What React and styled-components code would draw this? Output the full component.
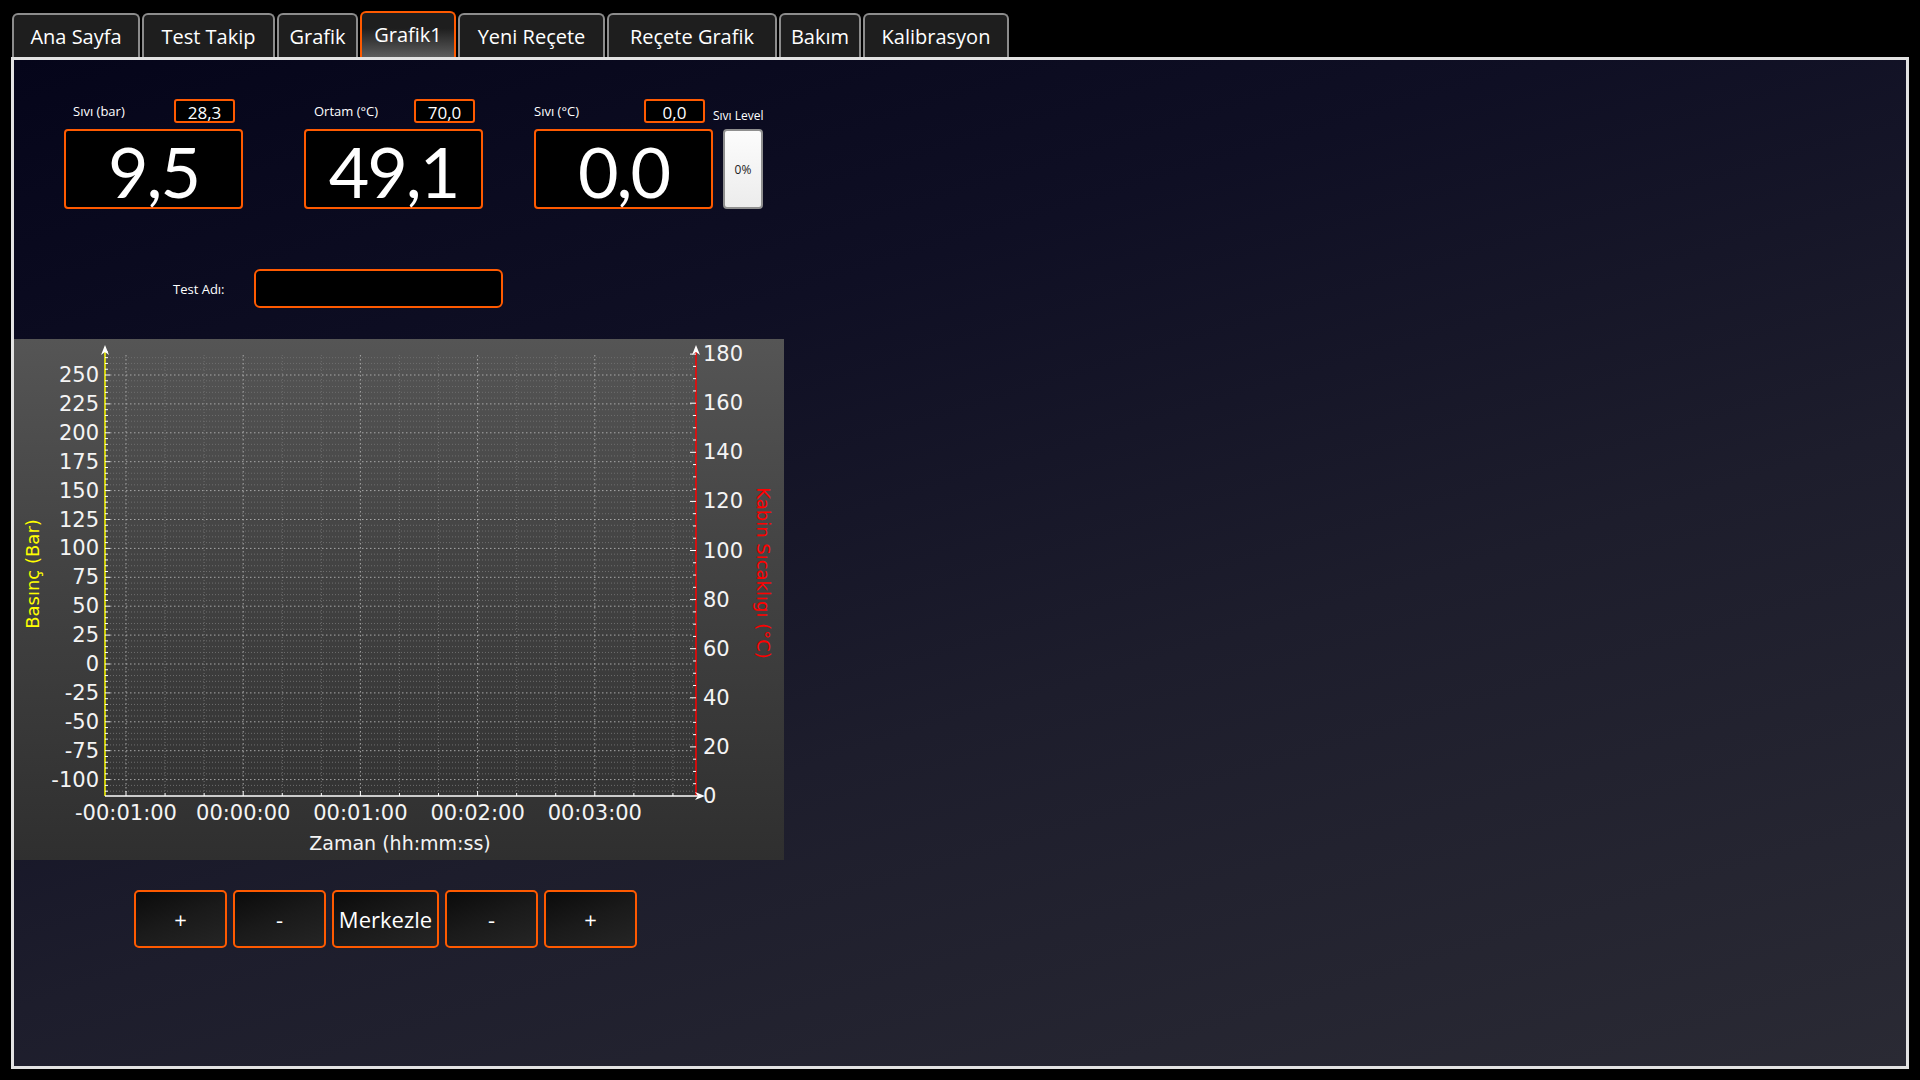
import React from 'react';
import styled, { createGlobalStyle } from 'styled-components';

const GlobalStyle = createGlobalStyle`
    html, body {
        margin: 0;
        padding: 0;
        background: #000;
    }
    * {
        box-sizing: border-box;
    }
`;

const UI_FONT = `"Open Sans", "Noto Sans", sans-serif`;
const CHART_FONT = `"DejaVu Sans", Verdana, sans-serif`;
const ORANGE = '#ff5a00';

export const Screen = styled.div`
    width: 1920px;
    height: 1080px;
    background: #000;
    padding-top: 11px;
    font-family: ${UI_FONT};
    color: #fff;
`;

export const TabBar = styled.div`
    display: flex;
    align-items: flex-end;
    gap: 2px;
    height: 46px;
    padding-left: 12px;
`;

export const Tab = styled.div`
    width: ${(p) => p.$w}px;
    height: ${(p) => (p.$active ? 46 : 44)}px;
    display: flex;
    align-items: center;
    justify-content: center;
    font-size: 20px;
    color: #fff;
    border: 2px solid ${(p) => (p.$active ? ORANGE : '#8c8c8c')};
    border-bottom: none;
    border-radius: 6px 6px 0 0;
    background: ${(p) =>
        p.$active
            ? 'linear-gradient(180deg, #1e1e1e 35%, #5c5c5c 100%)'
            : '#1e1e1e'};
    padding-bottom: ${(p) => (p.$active ? 2 : 0)}px;
`;

export const Panel = styled.div`
    margin-left: 11px;
    width: 1898px;
    height: 1012px;
    border: 3px solid #e2e2e2;
    background: linear-gradient(163deg, #05051a 0%, #0f0f24 30%, #1d1d2c 60%, #2a2a34 100%);
    display: flex;
    flex-direction: column;
`;

export const ReadoutRow = styled.div`
    display: flex;
    align-items: flex-start;
    padding: 39px 0 0 50px;
`;

export const Readout = styled.div`
    width: 179px;
    margin-left: ${(p) => p.$ml || 0}px;
    display: flex;
    flex-direction: column;
    gap: 6px;
`;

export const ReadoutHead = styled.div`
    height: 24px;
    display: flex;
    align-items: center;
    justify-content: space-between;
    padding: 0 8px 0 ${(p) => p.$pad}px;
`;

export const SmallLabel = styled.span`
    font-size: 13px;
    color: #fff;
    white-space: nowrap;
`;

export const SetBox = styled.div`
    width: 61px;
    height: 24px;
    border: 2px solid ${ORANGE};
    border-radius: 3px;
    background: #000;
    display: flex;
    align-items: center;
    justify-content: center;
    font-size: 17px;
    padding-top: 2px;
`;

export const BigBox = styled.div`
    height: 80px;
    border: 2px solid ${ORANGE};
    border-radius: 4px;
    background: #000;
    display: flex;
    align-items: center;
    justify-content: center;
    font-family: "Lato", "Open Sans", sans-serif;
    font-size: 70px;
    letter-spacing: -2px;
    padding-top: 4px;
`;

export const LevelCol = styled.div`
    width: 56px;
    display: flex;
    flex-direction: column;
    gap: 6px;
`;

export const LevelHead = styled.div`
    height: 24px;
    display: flex;
    align-items: flex-end;
    font-size: 12px;
    line-height: 14px;
    white-space: nowrap;
`;

export const LevelBar = styled.div`
    margin-left: 10px;
    width: 40px;
    height: 80px;
    border: 2px solid #8f8f8f;
    border-radius: 4px;
    background: linear-gradient(180deg, #fcfcfc, #ececec);
    color: #222;
    font-size: 12px;
    display: flex;
    align-items: center;
    justify-content: center;
`;

export const NameRow = styled.div`
    display: flex;
    align-items: center;
    gap: 29px;
    margin-top: 60px;
    padding-left: 159px;
`;

export const NameInput = styled.div`
    width: 249px;
    height: 39px;
    border: 2px solid ${ORANGE};
    border-radius: 6px;
    background: #000;
`;

export const ChartBox = styled.div`
    margin-top: 31px;
    width: 770px;
    height: 521px;
    background: linear-gradient(180deg, #555555 0%, #444444 40%, #2f2f2f 100%);
    svg {
        display: block;
    }
`;

export const ButtonRow = styled.div`
    display: flex;
    gap: 6px;
    margin-top: 30px;
    padding-left: 120px;
`;

export const ZoomButton = styled.div`
    width: ${(p) => p.$w || 93}px;
    height: 58px;
    border: 2px solid ${ORANGE};
    border-radius: 5px;
    background: linear-gradient(160deg, #0b0b0b 0%, #1a1a1a 50%, #252525 100%);
    display: flex;
    align-items: center;
    justify-content: center;
    font-size: 22px;
    color: #fff;
`;

const tabs = [
    { label: 'Ana Sayfa', w: 128 },
    { label: 'Test Takip', w: 133 },
    { label: 'Grafik', w: 81 },
    { label: 'Grafik1', w: 96, active: true },
    { label: 'Yeni Reçete', w: 147 },
    { label: 'Reçete Grafik', w: 170 },
    { label: 'Bakım', w: 82 },
    { label: 'Kalibrasyon', w: 146 },
];

const readouts = [
    { label: 'Sıvı (bar)', set: '28,3', value: '9,5', pad: 9, ml: 0 },
    { label: 'Ortam (°C)', set: '70,0', value: '49,1', pad: 10, ml: 61 },
    { label: 'Sıvı (°C)', set: '0,0', value: '0,0', pad: 0, ml: 51 },
];

// chart geometry (svg coords)
const LEFT_X = 91;
const RIGHT_X = 682;
const BASE_Y = 457;
const leftY = (v) => 325 - v * 1.156;
const rightY = (v) => BASE_Y - v * 2.455;
const timeX = (k) => 112 + k * 117.2;

const Chart = () => {
    const hMinor = [];
    const leftTicks = [];
    for (let v = -110; v <= 275; v += 5) {
        const y = leftY(v);
        const major = v % 25 === 0;
        if (y > 12 && y < 455) {
            leftTicks.push({ y, major });
        }
        if (y > 16 && y < 453 && !major) hMinor.push(y);
    }
    const hMajor = [];
    for (let v = -100; v <= 250; v += 25) hMajor.push(leftY(v));

    const rightTicks = [];
    for (let v = 5; v <= 180; v += 5) rightTicks.push({ y: rightY(v), major: v % 20 === 0 });

    const vMajor = [0, 1, 2, 3, 4].map(timeX);
    const vMinor = [];
    for (let k = 0; k < 5; k++) {
        [1, 2].forEach((j) => {
            const x = timeX(k + j / 3);
            if (x < RIGHT_X - 3) vMinor.push(x);
        });
    }
    const xLabels = ['-00:01:00', '00:00:00', '00:01:00', '00:02:00', '00:03:00'];
    const leftLabels = [250, 225, 200, 175, 150, 125, 100, 75, 50, 25, 0, -25, -50, -75, -100];
    const rightLabels = [180, 160, 140, 120, 100, 80, 60, 40, 20, 0];

    return (
        <svg width="770" height="521" viewBox="0 0 770 521" fontFamily={CHART_FONT}>
            {/* grid */}
            {hMinor.map((y, i) => (
                <line key={`hm${i}`} x1={LEFT_X + 5} x2={RIGHT_X - 2} y1={y} y2={y}
                    stroke="#6e6e6e" strokeWidth="1" strokeDasharray="1 2" />
            ))}
            {vMinor.map((x, i) => (
                <line key={`vm${i}`} x1={x} x2={x} y1={16} y2={453}
                    stroke="#6e6e6e" strokeWidth="1" strokeDasharray="1 2" />
            ))}
            {hMajor.map((y, i) => (
                <line key={`hM${i}`} x1={LEFT_X + 5} x2={RIGHT_X - 2} y1={y} y2={y}
                    stroke="#a8a8a8" strokeWidth="1" strokeDasharray="1.5 2.5" />
            ))}
            {vMajor.map((x, i) => (
                <line key={`vM${i}`} x1={x} x2={x} y1={16} y2={453}
                    stroke="#a8a8a8" strokeWidth="1" strokeDasharray="1.5 2.5" />
            ))}

            {/* left axis */}
            <line x1={LEFT_X} x2={LEFT_X} y1={8} y2={BASE_Y} stroke="#ffff00" strokeWidth="1.5" />
            {leftTicks.map((t, i) => (
                <line key={`lt${i}`} x1={LEFT_X} x2={LEFT_X + (t.major ? 5 : 3)} y1={t.y} y2={t.y}
                    stroke="#fff" strokeWidth="1" />
            ))}
            <polygon points={`${LEFT_X},6 ${LEFT_X - 4},16 ${LEFT_X},13 ${LEFT_X + 4},16`} fill="#fff" />
            {leftLabels.map((v) => (
                <text key={`ll${v}`} x={85} y={leftY(v)} fill="#f4f4f4" fontSize="21"
                    textAnchor="end" dominantBaseline="central">{v}</text>
            ))}

            {/* right axis */}
            <line x1={RIGHT_X} x2={RIGHT_X} y1={8} y2={BASE_Y} stroke="#ff0000" strokeWidth="1.5" />
            {rightTicks.map((t, i) => (
                <line key={`rt${i}`} x1={RIGHT_X - (t.major ? 6 : 3)} x2={RIGHT_X} y1={t.y} y2={t.y}
                    stroke="#fff" strokeWidth="1" />
            ))}
            <polygon points={`${RIGHT_X},6 ${RIGHT_X - 4},16 ${RIGHT_X},13 ${RIGHT_X + 4},16`} fill="#fff" />
            {rightLabels.map((v) => (
                <text key={`rl${v}`} x={689} y={rightY(v)} fill="#f4f4f4" fontSize="21"
                    dominantBaseline="central">{v}</text>
            ))}

            {/* time axis */}
            <line x1={LEFT_X} x2={688} y1={BASE_Y} y2={BASE_Y} stroke="#fff" strokeWidth="1.5" />
            {vMajor.map((x, i) => (
                <line key={`xt${i}`} x1={x} x2={x} y1={BASE_Y - 5} y2={BASE_Y} stroke="#fff" strokeWidth="1" />
            ))}
            {vMinor.map((x, i) => (
                <line key={`xm${i}`} x1={x} x2={x} y1={BASE_Y - 3} y2={BASE_Y} stroke="#fff" strokeWidth="1" />
            ))}
            <polygon points={`691,${BASE_Y} 681,${BASE_Y - 4} 684,${BASE_Y} 681,${BASE_Y + 4}`} fill="#fff" />
            {xLabels.map((l, i) => (
                <text key={l} x={vMajor[i]} y={474} fill="#f4f4f4" fontSize="21"
                    textAnchor="middle" dominantBaseline="central">{l}</text>
            ))}

            {/* axis titles */}
            <text x={386} y={504} fill="#f4f4f4" fontSize="19" textAnchor="middle"
                dominantBaseline="central">Zaman (hh:mm:ss)</text>
            <text x={18} y={235} fill="#ffff00" fontSize="18" textAnchor="middle"
                dominantBaseline="central" transform="rotate(-90 18 235)">Basınç (Bar)</text>
            <text x={749} y={234} fill="#ff0000" fontSize="18" textAnchor="middle"
                dominantBaseline="central" transform="rotate(90 749 234)">Kabin Sıcaklıgı (°C)</text>
        </svg>
    );
};

const App = () => {
    return (
        <Screen>
            <GlobalStyle />
            <TabBar>
                {tabs.map((t) => (
                    <Tab key={t.label} $w={t.w} $active={t.active}>{t.label}</Tab>
                ))}
            </TabBar>

            <Panel>
                <ReadoutRow>
                    {readouts.map((r) => (
                        <Readout key={r.label + r.value} $ml={r.ml}>
                            <ReadoutHead $pad={r.pad}>
                                <SmallLabel>{r.label}</SmallLabel>
                                <SetBox>{r.set}</SetBox>
                            </ReadoutHead>
                            <BigBox>{r.value}</BigBox>
                        </Readout>
                    ))}
                    <LevelCol>
                        <LevelHead>Sıvı Level</LevelHead>
                        <LevelBar>0%</LevelBar>
                    </LevelCol>
                </ReadoutRow>

                <NameRow>
                    <SmallLabel>Test Adı:</SmallLabel>
                    <NameInput />
                </NameRow>

                <ChartBox>
                    <Chart />
                </ChartBox>

                <ButtonRow>
                    <ZoomButton>+</ZoomButton>
                    <ZoomButton>-</ZoomButton>
                    <ZoomButton $w={107}>Merkezle</ZoomButton>
                    <ZoomButton>-</ZoomButton>
                    <ZoomButton>+</ZoomButton>
                </ButtonRow>
            </Panel>
        </Screen>
    );
};

export default App;
